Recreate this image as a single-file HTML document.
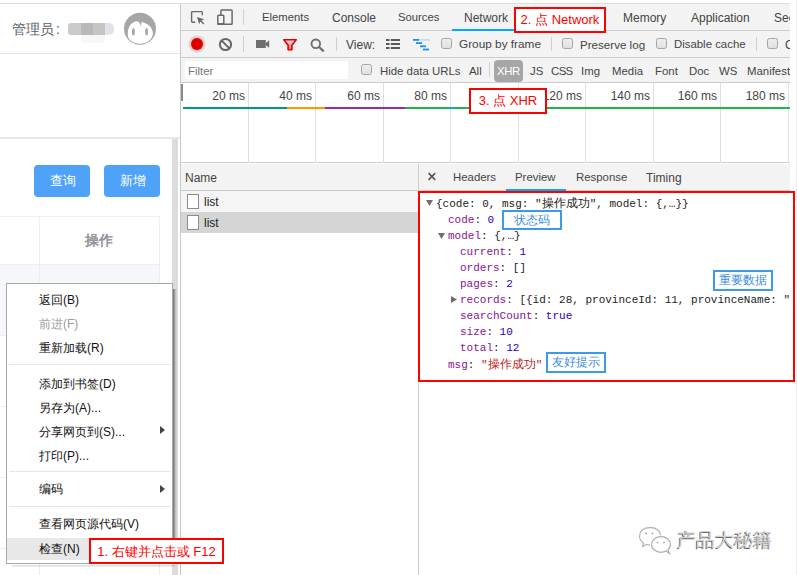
<!DOCTYPE html>
<html><head><meta charset="utf-8">
<style>
*{margin:0;padding:0;box-sizing:border-box}
html,body{width:797px;height:575px;overflow:hidden;background:#fff}
body{position:relative;font-family:"Liberation Sans",sans-serif;font-size:12px;color:#222}
.a{position:absolute}
.t{position:absolute;white-space:nowrap;line-height:1}
.hl{position:absolute;height:1px}
.vl{position:absolute;width:1px}
.cb{width:11px;height:11px;border:1px solid #a6a6a6;border-radius:2.5px;background:linear-gradient(#eeeeee,#e0e0e0)}
.json{position:absolute;white-space:nowrap;font-family:"Liberation Mono",monospace;font-size:11px;line-height:12px;color:#222}
.k{color:#881391}.n{color:#1c00cf}.s{color:#c41a16}
.cj{font-family:"Liberation Sans",sans-serif;font-size:12px}
.rb{position:absolute;border:2px solid #f00;background:#fff;display:flex;align-items:center;justify-content:center;white-space:nowrap;color:#f00;font-size:13px}
.bb{position:absolute;border:2px solid #3d9ae8;background:#fff;display:flex;align-items:center;justify-content:center;white-space:nowrap;color:#3d8fe0;font-size:12px}
.cw{display:inline-block;white-space:nowrap}
</style></head><body>

<!-- top line -->
<div class="hl" style="left:0;top:3px;width:790px;background:#dedede"></div>

<!-- ===== LEFT PAGE ===== -->
<div class="t" style="left:12px;top:22px;font-size:14px;color:#5a5e66"><span class="cw" style="width:3em">管理员</span><span style="margin-left:2px">:</span></div>
<div class="a" style="left:68px;top:23px;width:13px;height:12px;background:#cbcbcb;border-radius:3px 0 0 3px"></div>
<div class="a" style="left:81px;top:23px;width:12px;height:12px;background:#b9b9b9"></div>
<div class="a" style="left:93px;top:23px;width:12px;height:12px;background:#c5c5c5"></div>
<div class="a" style="left:105px;top:23px;width:9px;height:12px;background:#e2e2e8;border-radius:0 5px 5px 0"></div>
<div class="a" style="left:81px;top:35px;width:24px;height:8px;background:#f7f7f7;border-radius:0 0 4px 4px"></div>
<svg class="a" style="left:120px;top:9px" width="40" height="40" viewBox="120 9 40 40">
  <circle cx="140" cy="28.8" r="16" fill="#a6a6a6"/>
  <path d="M127.8 35 C127.5 28 130.5 22.5 136 21.3 C138.3 21 140.2 23 140.9 26.3 C141.3 24.5 141.5 23 141.2 21.9 C147 22.5 152.5 27 153 33 C152.5 40 146.5 43.7 140 43.7 C133.5 43.7 128 40 127.8 35 Z" fill="#fff"/>
  <ellipse cx="133.4" cy="31.7" rx="1.4" ry="3.8" fill="#a6a6a6"/>
  <ellipse cx="146.6" cy="31.7" rx="1.4" ry="3.8" fill="#a6a6a6"/>
</svg>
<div class="hl" style="left:0;top:53px;width:180px;background:#e6e6e6"></div>

<div class="a" style="left:0;top:137px;width:180px;height:2px;background:#e4e7ed"></div>
<div class="a" style="left:172px;top:139px;width:6px;height:436px;background:#dcdcdc"></div>

<div class="a" style="left:34px;top:165px;width:56px;height:32px;background:#4ea3f9;border-radius:4px"></div>
<div class="t" style="left:50px;top:174px;font-size:13px;color:#fff"><span class="cw" style="width:2em">查询</span></div>
<div class="a" style="left:104px;top:165px;width:56px;height:32px;background:#4ea3f9;border-radius:4px"></div>
<div class="t" style="left:120px;top:174px;font-size:13px;color:#fff"><span class="cw" style="width:2em">新增</span></div>

<!-- table -->
<div class="a" style="left:0;top:265px;width:159px;height:70px;background:#f5f7fa"></div>
<div class="hl" style="left:0;top:216px;width:160px;background:#ebeef5"></div>
<div class="vl" style="left:39px;top:216px;height:359px;background:#ebeef5"></div>
<div class="vl" style="left:159px;top:216px;height:359px;background:#ebeef5"></div>
<div class="hl" style="left:0;top:264px;width:160px;background:#ebeef5"></div>
<div class="t" style="left:85px;top:233px;font-size:14px;font-weight:bold;color:#909399"><span class="cw" style="width:2em">操作</span></div>
<div class="hl" style="left:0;top:335px;width:160px;background:#ebeef5"></div>
<div class="hl" style="left:0;top:406px;width:160px;background:#ebeef5"></div>
<div class="hl" style="left:0;top:477px;width:160px;background:#ebeef5"></div>
<div class="hl" style="left:0;top:548px;width:160px;background:#ebeef5"></div>

<!-- context menu -->
<div class="a" style="left:173px;top:289px;width:4px;height:249px;background:linear-gradient(to right,rgba(0,0,0,.5),rgba(0,0,0,.15) 60%,rgba(0,0,0,0))"></div>
<div class="a" style="left:12px;top:565px;width:163px;height:2px;background:linear-gradient(rgba(0,0,0,.16),rgba(0,0,0,.04))"></div>
<div class="a" style="left:6px;top:283px;width:167px;height:281px;background:#fff;border:1px solid #a8a8a8"></div>
<div class="a" style="left:7px;top:538px;width:165px;height:22px;background:#e8e8e8"></div>
<div class="hl" style="left:9px;top:364px;width:161px;background:#e6e6e6"></div>
<div class="hl" style="left:9px;top:471px;width:161px;background:#e6e6e6"></div>
<div class="hl" style="left:9px;top:506px;width:161px;background:#e6e6e6"></div>
<div class="t" style="left:39px;top:294px;color:#111"><span class="cw" style="width:2em">返回</span>(B)</div>
<div class="t" style="left:39px;top:318px;color:#9a9a9a"><span class="cw" style="width:2em">前进</span>(F)</div>
<div class="t" style="left:39px;top:342px;color:#111"><span class="cw" style="width:4em">重新加载</span>(R)</div>
<div class="t" style="left:39px;top:378px;color:#111"><span class="cw" style="width:5em">添加到书签</span>(D)</div>
<div class="t" style="left:39px;top:402px;color:#111"><span class="cw" style="width:3em">另存为</span>(A)...</div>
<div class="t" style="left:39px;top:426px;color:#111"><span class="cw" style="width:5em">分享网页到</span>(S)...</div>
<div class="t" style="left:39px;top:450px;color:#111"><span class="cw" style="width:2em">打印</span>(P)...</div>
<div class="t" style="left:39px;top:483px;color:#111"><span class="cw" style="width:2em">编码</span></div>
<div class="t" style="left:39px;top:518px;color:#111"><span class="cw" style="width:7em">查看网页源代码</span>(V)</div>
<div class="t" style="left:39px;top:543px;color:#111"><span class="cw" style="width:2em">检查</span>(N)</div>
<svg class="a" style="left:160px;top:426px" width="6" height="8"><path d="M0 0 L5 4 L0 8Z" fill="#444"/></svg>
<svg class="a" style="left:160px;top:485px" width="6" height="8"><path d="M0 0 L5 4 L0 8Z" fill="#444"/></svg>

<!-- ===== DEVTOOLS ===== -->
<div class="a" style="left:180px;top:4px;width:610px;height:571px;background:#fff;border-left:1px solid #c8c8c8"></div>
<!-- tab bar -->
<div class="a" style="left:181px;top:4px;width:609px;height:27px;background:#f3f3f3;border-bottom:1px solid #cdcdcd"></div>
<svg class="a" style="left:188px;top:8px" width="20" height="20" viewBox="0 0 20 20">
  <path d="M7.3 14.2 H4.6 Q3.6 14.2 3.6 13.2 V4.6 Q3.6 3.6 4.6 3.6 H13.3 Q14.3 3.6 14.3 4.6 V7.2" fill="none" stroke="#6a6a6a" stroke-width="1.4"/>
  <path d="M9 9 L16.2 11.3 L13.4 12.6 L16.4 15.6 L15.4 16.6 L12.4 13.6 L11.1 16.3 Z" fill="#6a6a6a"/>
</svg>
<svg class="a" style="left:214px;top:7px" width="22" height="20" viewBox="0 0 22 20">
  <rect x="6.9" y="2.9" width="11.2" height="14.4" rx="0.8" fill="none" stroke="#6a6a6a" stroke-width="1.5"/>
  <rect x="3.8" y="8.2" width="6" height="9.1" rx="0.8" fill="#f3f3f3" stroke="#6a6a6a" stroke-width="1.5"/>
  <rect x="3.4" y="16" width="6.8" height="1.8" fill="#6a6a6a"/>
</svg>
<div class="vl" style="left:243px;top:9px;height:16px;background:#cfcfcf"></div>
<div class="t" style="left:262px;top:12px;font-size:11.3px;color:#444">Elements</div>
<div class="t" style="left:332px;top:12px;color:#444">Console</div>
<div class="t" style="left:398px;top:12px;font-size:11.3px;color:#444">Sources</div>
<div class="t" style="left:464px;top:12px;color:#444">Network</div>
<div class="a" style="left:452px;top:29px;width:64px;height:2px;background:#03a9f4"></div>
<div class="t" style="left:623px;top:12px;color:#444">Memory</div>
<div class="t" style="left:691px;top:12px;color:#444">Application</div>
<div class="t" style="left:774px;top:12px;color:#444">Security</div>
<!-- toolbar 2 -->
<div class="a" style="left:181px;top:31px;width:609px;height:27px;background:#f3f3f3;border-bottom:1px solid #cdcdcd"></div>
<div class="a" style="left:191px;top:38px;width:12px;height:12px;border-radius:50%;background:#dc0000;box-shadow:0 0 2px 2px rgba(220,0,0,.22)"></div>
<svg class="a" style="left:218px;top:37px" width="15" height="15" viewBox="0 0 15 15">
  <circle cx="7.5" cy="7.5" r="5.6" fill="none" stroke="#666" stroke-width="2"/>
  <path d="M3.6 3.6 L11.4 11.4" stroke="#666" stroke-width="2"/>
</svg>
<div class="vl" style="left:243px;top:36px;height:16px;background:#cfcfcf"></div>
<svg class="a" style="left:256px;top:40px" width="14" height="9" viewBox="0 0 14 9">
  <rect x="0" y="0" width="9.8" height="8" fill="#6e6e6e"/>
  <path d="M9.5 3.2 L13.2 0.3 V7.8 L9.5 4.9Z" fill="#6e6e6e"/>
</svg>
<svg class="a" style="left:282px;top:38px" width="16" height="14" viewBox="0 0 16 14">
  <defs><linearGradient id="fg" x1="0" y1="0" x2="0" y2="1"><stop offset="0" stop-color="#f7e0e0"/><stop offset="1" stop-color="#e56a6a"/></linearGradient></defs>
  <path d="M1.8 1.8 H14.2 L9.9 7.2 V11.8 H6.1 V7.2 Z" fill="url(#fg)" stroke="#e00000" stroke-width="1.6" stroke-linejoin="round"/>
</svg>
<svg class="a" style="left:310px;top:38px" width="16" height="14" viewBox="0 0 16 14">
  <circle cx="5.8" cy="5.8" r="4.3" fill="none" stroke="#6e6e6e" stroke-width="1.8"/>
  <path d="M9 9 L13.8 13.4" stroke="#6e6e6e" stroke-width="2.2"/>
</svg>
<div class="vl" style="left:336px;top:37px;height:14px;background:#cfcfcf"></div>
<div class="t" style="left:346px;top:39px;color:#444">View:</div>
<svg class="a" style="left:386px;top:39px" width="14" height="10" viewBox="0 0 14 10">
  <rect x="0" y="0" width="3.6" height="2" fill="#5a5a5a"/><rect x="4.8" y="0" width="9.2" height="2" fill="#5a5a5a"/>
  <rect x="0" y="4" width="3.6" height="2" fill="#5a5a5a"/><rect x="4.8" y="4" width="9.2" height="2" fill="#5a5a5a"/>
  <rect x="0" y="8" width="3.6" height="2" fill="#5a5a5a"/><rect x="4.8" y="8" width="9.2" height="2" fill="#5a5a5a"/>
</svg>
<svg class="a" style="left:413px;top:39px" width="17" height="12" viewBox="0 0 17 12">
  <rect x="0" y="0" width="6" height="1.8" fill="#1a8ef0"/><rect x="6" y="0" width="11" height="1.8" fill="#bcdcf7"/>
  <rect x="3" y="3.2" width="6" height="1.8" fill="#1a8ef0"/>
  <rect x="7" y="6.4" width="6" height="1.8" fill="#1a8ef0"/>
  <rect x="10" y="9.6" width="6" height="1.8" fill="#1a8ef0"/>
</svg>
<div class="a cb" style="left:441px;top:38px"></div>
<div class="t" style="left:459px;top:39px;font-size:11.8px;color:#444">Group by frame</div>
<div class="vl" style="left:551px;top:37px;height:14px;background:#cfcfcf"></div>
<div class="a cb" style="left:562px;top:38px"></div>
<div class="t" style="left:580px;top:39px;font-size:11.6px;color:#444">Preserve log</div>
<div class="a cb" style="left:656px;top:38px"></div>
<div class="t" style="left:674px;top:39px;font-size:11.4px;color:#444">Disable cache</div>
<div class="vl" style="left:756px;top:37px;height:14px;background:#cfcfcf"></div>
<div class="a cb" style="left:767px;top:38px"></div>
<div class="t" style="left:785px;top:39px;color:#444">Offline</div>
<!-- filter row -->
<div class="a" style="left:181px;top:58px;width:609px;height:25px;background:#f3f3f3;border-bottom:1px solid #cdcdcd"></div>
<div class="a" style="left:185px;top:61px;width:163px;height:18px;background:#fff"></div>
<div class="t" style="left:188px;top:66px;font-size:11.4px;color:#757575">Filter</div>
<div class="a cb" style="left:361px;top:64px"></div>
<div class="t" style="left:380px;top:66px;font-size:11.4px;color:#444">Hide data URLs</div>
<div class="t" style="left:469px;top:66px;font-size:11.4px;color:#444">All</div>
<div class="vl" style="left:489px;top:62px;height:15px;background:#d0d0d0"></div>
<div class="a" style="left:494px;top:60px;width:29px;height:22px;background:#a6a6a6;border-radius:4px"></div>
<div class="t" style="left:497px;top:66px;font-size:11.4px;letter-spacing:-0.4px;color:#fff">XHR</div>
<div class="t" style="left:530px;top:66px;font-size:11.4px;color:#444">JS</div>
<div class="t" style="left:551px;top:66px;font-size:11.4px;letter-spacing:-0.6px;color:#444">CSS</div>
<div class="t" style="left:581px;top:66px;font-size:11.4px;color:#444">Img</div>
<div class="t" style="left:612px;top:66px;font-size:11.4px;color:#444">Media</div>
<div class="t" style="left:655px;top:66px;font-size:11.4px;color:#444">Font</div>
<div class="t" style="left:689px;top:66px;font-size:11.4px;color:#444">Doc</div>
<div class="t" style="left:719px;top:66px;font-size:11.4px;color:#444">WS</div>
<div class="t" style="left:747px;top:66px;font-size:11.4px;color:#444">Manifest</div>
<!-- timeline -->
<div class="a" style="left:181px;top:83px;width:609px;height:80px;background:#fff;border-bottom:1px solid #cdcdcd"></div>
<div class="a" style="left:181px;top:84px;width:2px;height:17px;background:#8a8a8a"></div>
<div class="vl" style="left:248px;top:83px;height:80px;background:#e0e0e0"></div>
<div class="t" style="left:185px;top:90px;width:60px;text-align:right;color:#444">20 ms</div>
<div class="vl" style="left:315px;top:83px;height:80px;background:#e0e0e0"></div>
<div class="t" style="left:252px;top:90px;width:60px;text-align:right;color:#444">40 ms</div>
<div class="vl" style="left:383px;top:83px;height:80px;background:#e0e0e0"></div>
<div class="t" style="left:320px;top:90px;width:60px;text-align:right;color:#444">60 ms</div>
<div class="vl" style="left:450px;top:83px;height:80px;background:#e0e0e0"></div>
<div class="t" style="left:387px;top:90px;width:60px;text-align:right;color:#444">80 ms</div>
<div class="vl" style="left:518px;top:83px;height:80px;background:#e0e0e0"></div>
<div class="t" style="left:455px;top:90px;width:60px;text-align:right;color:#444">100 ms</div>
<div class="vl" style="left:585px;top:83px;height:80px;background:#e0e0e0"></div>
<div class="t" style="left:522px;top:90px;width:60px;text-align:right;color:#444">120 ms</div>
<div class="vl" style="left:653px;top:83px;height:80px;background:#e0e0e0"></div>
<div class="t" style="left:590px;top:90px;width:60px;text-align:right;color:#444">140 ms</div>
<div class="vl" style="left:720px;top:83px;height:80px;background:#e0e0e0"></div>
<div class="t" style="left:657px;top:90px;width:60px;text-align:right;color:#444">160 ms</div>
<div class="vl" style="left:788px;top:83px;height:80px;background:#e0e0e0"></div>
<div class="t" style="left:725px;top:90px;width:60px;text-align:right;color:#444">180 ms</div>
<div class="a" style="left:183px;top:107px;width:104px;height:2px;background:#009688"></div>
<div class="a" style="left:287px;top:107px;width:38px;height:2px;background:#ff9800"></div>
<div class="a" style="left:325px;top:107px;width:80px;height:2px;background:#9c27b0"></div>
<div class="a" style="left:405px;top:107px;width:45px;height:2px;background:#21b549"></div>
<div class="a" style="left:450px;top:107px;width:4px;height:2px;background:#03a9f4"></div>
<div class="a" style="left:454px;top:107px;width:336px;height:2px;background:#21b549"></div>

<!-- lower: name list -->
<div class="a" style="left:181px;top:164px;width:237px;height:27px;background:#f3f3f3;border-bottom:1px solid #cdcdcd"></div>
<div class="t" style="left:185px;top:172px;color:#444">Name</div>
<div class="a" style="left:181px;top:191px;width:237px;height:21px;background:#f5f5f5"></div>
<div class="a" style="left:181px;top:212px;width:237px;height:21px;background:#d5d5d5"></div>
<div class="a" style="left:187px;top:194px;width:12px;height:15px;background:#fff;border:1px solid #8c8c8c"></div>
<div class="t" style="left:204px;top:196px;color:#222">list</div>
<div class="a" style="left:187px;top:215px;width:12px;height:15px;background:#fff;border:1px solid #8c8c8c"></div>
<div class="t" style="left:204px;top:217px;color:#222">list</div>
<div class="vl" style="left:418px;top:164px;height:411px;background:#cdcdcd"></div>
<!-- preview tabs -->
<div class="a" style="left:419px;top:164px;width:371px;height:27px;background:#f3f3f3;border-bottom:1px solid #cdcdcd"></div>
<svg class="a" style="left:427px;top:172px" width="10" height="10" viewBox="0 0 10 10"><path d="M1.6 1.1 L8.2 7.9 M8.2 1.1 L1.6 7.9" stroke="#555" stroke-width="1.6"/></svg>
<div class="t" style="left:453px;top:172px;font-size:11.4px;color:#444">Headers</div>
<div class="t" style="left:515px;top:172px;font-size:11.4px;color:#444">Preview</div>
<div class="a" style="left:506px;top:189px;width:60px;height:2px;background:#03a9f4"></div>
<div class="t" style="left:576px;top:172px;font-size:11.4px;color:#444">Response</div>
<div class="t" style="left:646px;top:172px;color:#444">Timing</div>

<!-- preview json -->
<div class="json" style="left:436px;top:197px">{code: 0, msg: "<span class="cj"><span class="cw" style="width:4em">操作成功</span></span>", model: {,…}}</div>
<svg class="a" style="left:426px;top:200px" width="8" height="7"><path d="M0 0H7L3.5 6Z" fill="#6e6e6e"/></svg>
<div class="json" style="left:448px;top:214px"><span class="k">code</span>: <span class="n">0</span></div>
<svg class="a" style="left:438px;top:233px" width="8" height="7"><path d="M0 0H7L3.5 6Z" fill="#6e6e6e"/></svg>
<div class="json" style="left:448px;top:230px"><span class="k">model</span>: {,…}</div>
<div class="json" style="left:460px;top:246px"><span class="k">current</span>: <span class="n">1</span></div>
<div class="json" style="left:460px;top:262px"><span class="k">orders</span>: []</div>
<div class="json" style="left:460px;top:278px"><span class="k">pages</span>: <span class="n">2</span></div>
<svg class="a" style="left:451px;top:296px" width="7" height="8"><path d="M0 0V7L6 3.5Z" fill="#6e6e6e"/></svg>
<div class="json" style="left:460px;top:294px"><span class="k">records</span>: [{id: 28, provinceId: 11, provinceName: "</div>
<div class="json" style="left:460px;top:310px"><span class="k">searchCount</span>: <span class="n">true</span></div>
<div class="json" style="left:460px;top:326px"><span class="k">size</span>: <span class="n">10</span></div>
<div class="json" style="left:460px;top:342px"><span class="k">total</span>: <span class="n">12</span></div>
<div class="json" style="left:448px;top:358px"><span class="k">msg</span>: <span class="s">"<span class="cj"><span class="cw" style="width:4em">操作成功</span></span>"</span></div>
<!-- watermark -->
<svg class="a" style="left:637px;top:525px" width="36" height="30" viewBox="0 0 36 30">
  <path d="M13 2.5 C6.5 2.5 2.5 6.5 2.5 11 C2.5 14 4 16.5 6.5 18 L5.5 21.5 L9.5 19.5 C10.5 19.8 11.8 20 13 20" fill="#fff" stroke="#b8b8b8" stroke-width="1.3"/>
  <path d="M13 2.5 C19 2.5 23.5 6 23.5 10.5" fill="none" stroke="#b8b8b8" stroke-width="1.3"/>
  <ellipse cx="24" cy="19.5" rx="9.5" ry="7.8" fill="#fff" stroke="#b0b0b0" stroke-width="1.3"/>
  <path d="M29 26 L32.5 28.5 L31 24.5" fill="#fff" stroke="#b0b0b0" stroke-width="1.2"/>
  <circle cx="9" cy="8.5" r="1" fill="#aaa"/><circle cx="15.5" cy="8.5" r="1" fill="#aaa"/>
  <circle cx="20.5" cy="17.5" r="0.9" fill="#aaa"/><circle cx="27" cy="17.5" r="0.9" fill="#aaa"/>
</svg>
<div class="t" style="left:677px;top:531px;font-size:18.6px;color:#d0d0d0;text-shadow:-0.7px 0.5px 0 #6a6a6a"><span class="cw" style="width:5em">产品大秘籍</span></div>
<!-- right clip -->
<div class="a" style="left:790px;top:0;width:7px;height:575px;background:#fff"></div>
<div class="vl" style="left:796px;top:0;height:575px;background:#eeeeee"></div>
<!-- annotations -->
<div class="rb" style="left:418px;top:191px;width:377px;height:191px;background:transparent"></div>
<div class="bb" style="left:502px;top:210px;width:60px;height:20px"><span><span class="cw" style="width:3em">状态码</span></span></div>
<div class="bb" style="left:713px;top:270px;width:60px;height:21px"><span><span class="cw" style="width:4em">重要数据</span></span></div>
<div class="bb" style="left:546px;top:352px;width:60px;height:21px"><span><span class="cw" style="width:4em">友好提示</span></span></div>
<div class="rb" style="left:514px;top:7px;width:92px;height:26px"><span>2. <span class="cw" style="width:1em">点</span> Network</span></div>
<div class="rb" style="left:469px;top:88px;width:78px;height:26px"><span>3. <span class="cw" style="width:1em">点</span> XHR</span></div>
<div class="rb" style="left:89px;top:538px;width:135px;height:26px;padding-top:2px"><span>1. <span class="cw" style="width:6em">右键并点击或</span> F12</span></div>
</body></html>
